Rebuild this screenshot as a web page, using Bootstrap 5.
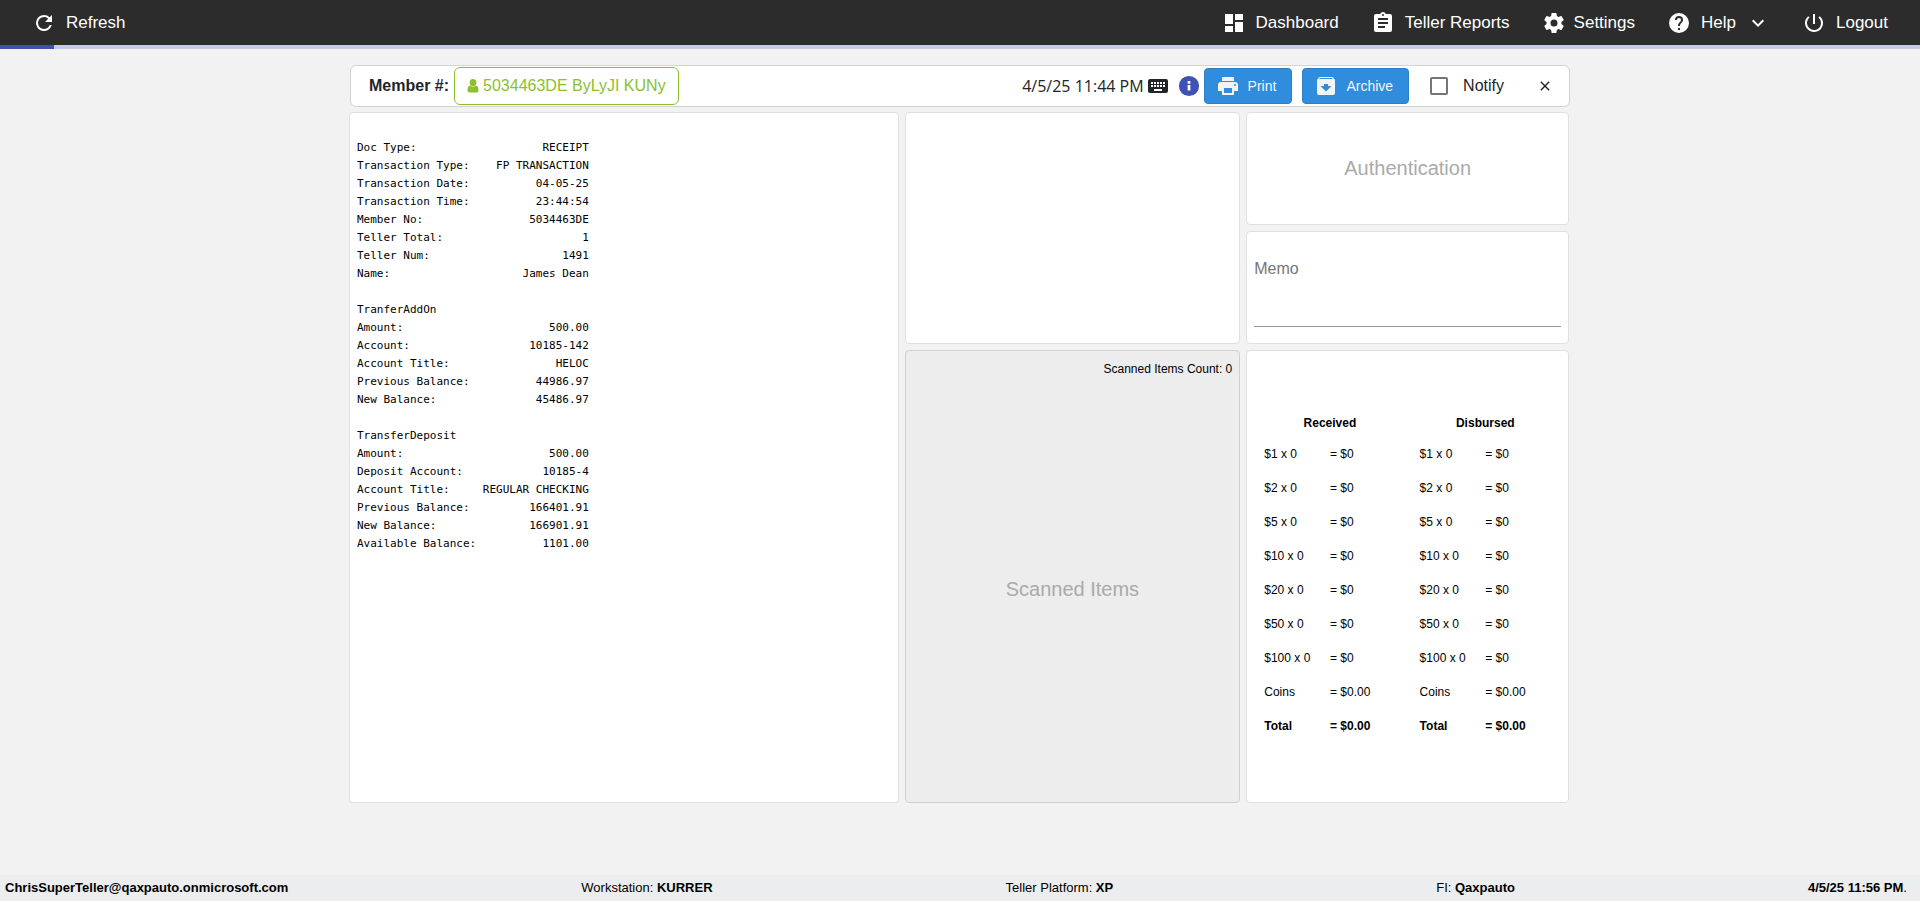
<!DOCTYPE html>
<html lang="en">
<head>
<meta charset="utf-8">
<meta name="viewport" content="width=device-width, initial-scale=1">
<title>Teller Receipt</title>
<link href="https://cdn.jsdelivr.net/npm/bootstrap@5.3.0/dist/css/bootstrap.min.css" rel="stylesheet">
<style>
  body { font-family: "Liberation Sans", Arial, sans-serif; background: #f2f2f2; color: #212529; font-size: 16px; }
  svg { fill: currentColor; flex: none; display: block; }
  .topbar { background: #2c2c2c; min-height: 45px; padding: 0 32px; }
  .topbar a { color: #fff; font-size: 17px; line-height: 24px; text-decoration: none; gap: 10px; }
  .topbar .menu { gap: 32px; }
  .load-track { height: 4px; background: #c5cae9; border-radius: 0; }
  .load-track .progress-bar { background: #3f51b5; }
  .workspace { width: 100%; max-width: 1222px; margin: 16px auto; }
  .toolstrip { background: #fff; border: 1px solid #d3d3d3; border-radius: 6px; min-height: 42px; padding: 0 12px 0 18px; margin: 0 1px 5px; }
  .member { gap: 5px; }
  .btn-member { --bs-btn-color: #8bc12e; --bs-btn-border-color: #8bc12e; --bs-btn-hover-color: #fff; --bs-btn-hover-bg: #8bc12e; --bs-btn-padding-x: 12px; --bs-btn-padding-y: 6px; line-height: 24px; background: #fff; gap: 4px; }
  .stamp { font-family: "Segoe UI", "Open Sans", sans-serif; margin-right: 2px; }
  .info-mark { color: #3f51b5; }
  .actions { gap: 10px; }
  .btn-action { --bs-btn-color: #f4f4f4; --bs-btn-bg: #308ddd; --bs-btn-border-color: #2a7fc9; --bs-btn-hover-color: #fff; --bs-btn-hover-bg: #2a7fc9; --bs-btn-font-size: 14px; --bs-btn-border-radius: 4px; padding: 0 15px 0 11px; height: 36px; }
  .notify { margin-left: 21px; margin-right: 1px; gap: 15px; }
  .notify .form-check-input { width: 18px; height: 18px; border: 2px solid #757575; border-radius: 2px; margin: 0; }
  .board { display: grid; gap: 6px; grid-template-columns: 550fr 336fr 323fr; grid-template-rows: 113fr 113fr 454fr; min-height: calc(100vh - 210px); margin-right: 2px; }
  .pane { background: #fff; border: 1px solid #e0e0e0; border-radius: 4px; padding: 7px; min-width: 0; }
  .pane-receipt { grid-row: 1 / 4; }
  .pane-check { grid-row: 1 / 3; grid-column: 2; }
  .pane-scan { grid-row: 3; grid-column: 2; background: #ededed; border-color: #d0d0d0; color: #000; font-size: 12px; line-height: 22px; padding-bottom: 3px; }
  .pane-title { color: #aaa; font-size: 20px; line-height: 28px; }
  .pane-cash { padding: 7px 5px; }
  .receipt { font: 11px/18px "DejaVu Sans Mono", monospace; color: #000; white-space: pre; padding-top: 19px; margin: 0; }
  .memo-label { color: #757575; line-height: 24px; margin-top: 18px; }
  .memo-box { border: 0; border-bottom: 1px solid #949494; border-radius: 0; padding: 0; height: 46px; resize: none; }
  .cash { table-layout: fixed; width: 100%; font-size: 12px; line-height: 18px; color: #000; }
  .cash th { height: 27px; padding: 0; }
  .cash td { height: 34px; padding: 0; }
  .cash td:nth-child(odd) { padding-left: 12px; }
  .statusbar { background: #ecedee; color: #000; min-height: 26px; padding: 0 13px 0 5px; font-size: 13px; line-height: 26px; }
  .platform { padding-right: 30px; }
</style>
</head>
<body class="d-flex flex-column min-vh-100">
<header>
  <nav class="topbar d-flex align-items-center justify-content-between">
    <a href="#" class="d-flex align-items-center"><svg width="24" height="24" viewBox="0 0 24 24"><path d="M17.65 6.35A7.96 7.96 0 0 0 12 4a8 8 0 1 0 7.73 10h-2.08A6 6 0 1 1 12 6c1.66 0 3.14.69 4.22 1.78L13 11h7V4l-2.35 2.35z"/></svg>Refresh</a>
    <div class="menu d-flex">
      <a href="#" class="d-flex align-items-center"><svg width="24" height="24" viewBox="0 0 24 24"><path d="M3 13h8V3H3v10zm0 8h8v-6H3v6zm10 0h8V11h-8v10zm0-18v6h8V3h-8z"/></svg>Dashboard</a>
      <a href="#" class="d-flex align-items-center"><svg width="24" height="24" viewBox="0 0 24 24"><path d="M19 3h-4.18C14.4 1.84 13.3 1 12 1s-2.4.84-2.82 2H5a2 2 0 0 0-2 2v14a2 2 0 0 0 2 2h14a2 2 0 0 0 2-2V5a2 2 0 0 0-2-2zm-7 0a1 1 0 1 1 0 2 1 1 0 0 1 0-2zm2 14H7v-2h7v2zm3-4H7v-2h10v2zm0-4H7V7h10v2z"/></svg>Teller Reports</a>
      <a href="#" class="d-flex align-items-center gap-2"><svg width="24" height="24" viewBox="0 0 24 24"><path d="M19.43 12.98c.04-.32.07-.64.07-.98s-.03-.66-.07-.98l2.11-1.65c.19-.15.24-.42.12-.64l-2-3.46c-.12-.22-.39-.3-.61-.22l-2.49 1c-.52-.4-1.08-.73-1.69-.98l-.38-2.65A.49.49 0 0 0 14 2h-4c-.25 0-.46.18-.49.42l-.38 2.65c-.61.25-1.17.59-1.69.98l-2.49-1c-.23-.09-.49 0-.61.22l-2 3.46c-.13.22-.07.49.12.64l2.11 1.65c-.04.32-.07.65-.07.98s.03.66.07.98l-2.11 1.65c-.19.15-.24.42-.12.64l2 3.46c.12.22.39.3.61.22l2.49-1c.52.4 1.08.73 1.69.98l.38 2.65c.03.24.24.42.49.42h4c.25 0 .46-.18.49-.42l.38-2.65c.61-.25 1.17-.59 1.69-.98l2.49 1c.23.09.49 0 .61-.22l2-3.46c.12-.22.07-.49-.12-.64l-2.11-1.65zM12 15.5a3.5 3.5 0 1 1 0-7 3.5 3.5 0 0 1 0 7z"/></svg>Settings</a>
      <a href="#" class="d-flex align-items-center"><svg width="24" height="24" viewBox="0 0 24 24"><path d="M12 2a10 10 0 1 0 0 20 10 10 0 0 0 0-20zm1 17h-2v-2h2v2zm2.07-7.75-.9.92C13.45 12.9 13 13.5 13 15h-2v-.5c0-1.1.45-2.1 1.17-2.83l1.24-1.26c.37-.36.59-.86.59-1.41a2 2 0 1 0-4 0H8a4 4 0 1 1 8 0c0 .88-.36 1.68-.93 2.25z"/></svg>Help<svg width="24" height="24" viewBox="0 0 24 24"><path d="M7.41 8.59 12 13.17l4.59-4.58L18 10l-6 6-6-6z"/></svg></a>
      <a href="#" class="d-flex align-items-center"><svg width="24" height="24" viewBox="0 0 24 24"><path d="M13 3h-2v10h2V3zm4.83 2.17-1.42 1.42A6.92 6.92 0 0 1 19 12a7 7 0 1 1-11.42-5.42L6.17 5.17A8.93 8.93 0 0 0 3 12a9 9 0 1 0 14.83-6.83z"/></svg>Logout</a>
    </div>
  </nav>
  <div class="load-track progress" role="progressbar" aria-label="Loading"><div class="progress-bar" style="width: 2.8%"></div></div>
</header>

<main class="workspace flex-grow-1">
  <section class="toolstrip d-flex align-items-center justify-content-between">
    <div class="member d-flex align-items-center">
      <strong>Member #:</strong>
      <button type="button" class="btn btn-member d-flex align-items-center"><svg width="12" height="14" viewBox="0 0 11 14"><path d="M5.500 0a3.400 3.600 0 1 1 0 7.200 3.400 3.600 0 0 1 0-7.200zM2.600 6.400C.8 6.700 0 8.500 0 11.300 0 12.700.9 13.500 2 13.500h7c1.100 0 2-.8 2-2.200 0-2.800-.8-4.600-2.600-4.900a4.200 4.200 0 0 1-5.800 0z"/></svg>5034463DE ByLyJI KUNy</button>
    </div>
    <div class="d-flex align-items-center">
      <span class="stamp">4/5/25 11:44 PM</span>
      <svg class="me-2" width="24" height="24" viewBox="0 0 24 24"><path d="M20 5H4a2 2 0 0 0-2 2v10a2 2 0 0 0 2 2h16a2 2 0 0 0 2-2V7a2 2 0 0 0-2-2zm-9 3h2v2h-2V8zm0 3h2v2h-2v-2zM8 8h2v2H8V8zm0 3h2v2H8v-2zm-1 2H5v-2h2v2zm0-3H5V8h2v2zm9 7H8v-2h8v2zm0-4h-2v-2h2v2zm0-3h-2V8h2v2zm3 3h-2v-2h2v2zm0-3h-2V8h2v2z"/></svg>
      <svg class="info-mark me-1" width="22" height="22" viewBox="0 0 24 24"><path d="M12 1a11 11 0 1 0 0 22 11 11 0 0 0 0-22zm1.500 16h-3v-6h3v6zm0-7.500h-3v-3h3v3z"/></svg>
      <div class="actions d-flex">
        <button type="button" class="btn btn-action d-flex align-items-center gap-2"><svg width="24" height="24" viewBox="0 0 24 24"><path d="M19 8H5a3 3 0 0 0-3 3v6h4v4h12v-4h4v-6a3 3 0 0 0-3-3zm-3 11H8v-5h8v5zm3-7a1 1 0 1 1 0-2 1 1 0 0 1 0 2zm-1-9H6v4h12V3z"/></svg>Print</button>
        <button type="button" class="btn btn-action d-flex align-items-center gap-2"><svg width="24" height="24" viewBox="0 0 24 24"><path d="m20.540 5.230-1.390-1.680C18.880 3.210 18.470 3 18 3H6c-.47 0-.88.21-1.160.55L3.460 5.230C3.170 5.570 3 6.020 3 6.500V19a2 2 0 0 0 2 2h14a2 2 0 0 0 2-2V6.500c0-.48-.17-.93-.46-1.270zM12 17.500 6.500 12H10v-2h4v2h3.500L12 17.500zM5.120 5l.81-1h12l.94 1H5.120z"/></svg>Archive</button>
      </div>
      <div class="notify d-flex align-items-center">
        <input class="form-check-input" type="checkbox" id="notify"><label for="notify">Notify</label>
      </div>
      <button type="button" class="btn border-0 p-0 ms-4 ps-1" aria-label="Close"><svg width="24" height="24" viewBox="0 0 24 24"><path d="m7.300 8.300 1-1L12 11l3.700-3.700 1 1L13 12l3.700 3.700-1 1L12 13l-3.700 3.700-1-1L11 12z"/></svg></button>
    </div>
  </section>

  <div class="board">
    <section class="pane pane-receipt">
<pre class="receipt">Doc Type:                   RECEIPT
Transaction Type:    FP TRANSACTION
Transaction Date:          04-05-25
Transaction Time:          23:44:54
Member No:                5034463DE
Teller Total:                     1
Teller Num:                    1491
Name:                    James Dean

TranferAddOn
Amount:                      500.00
Account:                  10185-142
Account Title:                HELOC
Previous Balance:          44986.97
New Balance:               45486.97

TransferDeposit
Amount:                      500.00
Deposit Account:            10185-4
Account Title:     REGULAR CHECKING
Previous Balance:         166401.91
New Balance:              166901.91
Available Balance:          1101.00</pre>
    </section>
    <section class="pane pane-check"></section>
    <section class="pane pane-title d-flex align-items-center justify-content-center">Authentication</section>
    <section class="pane">
      <label class="memo-label d-block" for="memo">Memo</label>
      <textarea class="memo-box w-100 d-block" id="memo"></textarea>
    </section>
    <section class="pane pane-scan d-flex flex-column">
      <div class="text-end">Scanned Items Count: 0</div>
      <div class="pane-title flex-grow-1 d-flex align-items-center justify-content-center">Scanned Items</div>
    </section>
    <section class="pane pane-cash d-flex align-items-center">
      <table class="cash">
        <thead><tr><th colspan="2" class="text-center">Received</th><th colspan="2" class="text-center">Disbursed</th></tr></thead>
        <tbody>
          <tr><td>$1 x 0</td><td>= $0</td><td>$1 x 0</td><td>= $0</td></tr>
          <tr><td>$2 x 0</td><td>= $0</td><td>$2 x 0</td><td>= $0</td></tr>
          <tr><td>$5 x 0</td><td>= $0</td><td>$5 x 0</td><td>= $0</td></tr>
          <tr><td>$10 x 0</td><td>= $0</td><td>$10 x 0</td><td>= $0</td></tr>
          <tr><td>$20 x 0</td><td>= $0</td><td>$20 x 0</td><td>= $0</td></tr>
          <tr><td>$50 x 0</td><td>= $0</td><td>$50 x 0</td><td>= $0</td></tr>
          <tr><td>$100 x 0</td><td>= $0</td><td>$100 x 0</td><td>= $0</td></tr>
          <tr><td>Coins</td><td>= $0.00</td><td>Coins</td><td>= $0.00</td></tr>
          <tr class="fw-bold"><td>Total</td><td>= $0.00</td><td>Total</td><td>= $0.00</td></tr>
        </tbody>
      </table>
    </section>
  </div>
</main>

<footer class="statusbar d-flex justify-content-between">
  <strong>ChrisSuperTeller@qaxpauto.onmicrosoft.com</strong>
  <span>Workstation: <strong>KURRER</strong></span>
  <span class="platform">Teller Platform: <strong>XP</strong></span>
  <span>FI: <strong>Qaxpauto</strong></span>
  <span><strong>4/5/25 11:56 PM</strong>.</span>
</footer>
<script src="https://cdn.jsdelivr.net/npm/bootstrap@5.3.0/dist/js/bootstrap.bundle.min.js"></script>
</body>
</html>
